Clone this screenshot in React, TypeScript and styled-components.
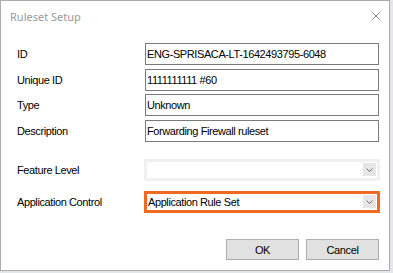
import React from 'react'
import styled, { createGlobalStyle } from 'styled-components'

const GlobalStyle = createGlobalStyle`
    html, body {
        margin: 0;
        padding: 0;
        background: #e4e6ea;
    }
    * {
        box-sizing: border-box;
    }
`

const Dialog = styled.div`
    width: 390px;
    height: 271px;
    background: #ffffff;
    border: 1px solid #ababab;
    display: flex;
    flex-direction: column;
    font-family: 'Liberation Sans', Arial, sans-serif;
    font-size: 11px;
    letter-spacing: -0.4px;
    color: #000000;
`

const TitleBar = styled.div`
    height: 30px;
    display: flex;
    align-items: center;
    justify-content: space-between;
    padding: 0 8px 0 9px;
`

const Title = styled.span`
    font-family: 'Noto Sans', 'Open Sans', sans-serif;
    font-size: 11px;
    letter-spacing: 0;
    color: #9a9a9a;
`

const CloseButton = styled.div`
    width: 10px;
    height: 10px;
    display: flex;
`

const Content = styled.div`
    padding: 12px 10px 0 16px;
    display: flex;
    flex-direction: column;
`

const FieldGrid = styled.div<{ $gap: number; $top?: number }>`
    display: grid;
    grid-template-columns: 128px 1fr;
    row-gap: ${(p) => p.$gap}px;
    align-items: center;
    margin-top: ${(p) => p.$top ?? 0}px;
`

const Label = styled.label`
    white-space: nowrap;
`

const TextBox = styled.input`
    height: 22px;
    width: 100%;
    border: 1px solid #7a7a7a;
    padding: 0 1px;
    font: inherit;
    letter-spacing: inherit;
    color: #000000;
    background: #ffffff;
    outline: none;
`

const Combo = styled.div<{ $variant: 'disabled' | 'highlight' }>`
    height: 22px;
    margin: 0 -1px;
    display: flex;
    align-items: center;
    justify-content: space-between;
    padding: 0 1px 0 1px;
    background: #ffffff;
    border: 3px solid
        ${(p) => (p.$variant === 'highlight' ? '#f26a1f' : '#f0f0f0')};
    color: #000000;
`

const ComboArrow = styled.div`
    width: 13px;
    height: 13px;
    background: #e6e6e6;
    display: flex;
    align-items: center;
    justify-content: center;
`

const ButtonRow = styled.div`
    display: flex;
    justify-content: flex-end;
    gap: 7px;
    margin-top: 26.5px;
`

const Button = styled.button`
    width: 73px;
    height: 21px;
    background: #e1e1e1;
    border: 1px solid #adadad;
    font: inherit;
    letter-spacing: inherit;
    color: #000000;
    padding: 0;
`

const Chevron = () => (
    <svg width="7" height="4" viewBox="0 0 7 4">
        <path d="M0.5 0.5 L3.5 3.5 L6.5 0.5" fill="none" stroke="#6d6d6d" strokeWidth="1" />
    </svg>
)

const CloseIcon = () => (
    <svg width="10" height="10" viewBox="0 0 10 10">
        <path d="M0.5 0.5 L9.5 9.5 M9.5 0.5 L0.5 9.5" stroke="#8c8c8c" strokeWidth="1" />
    </svg>
)

const textFields = [
    { label: 'ID', value: 'ENG-SPRISACA-LT-1642493795-6048' },
    { label: 'Unique ID', value: '1111111111 #60' },
    { label: 'Type', value: 'Unknown' },
    { label: 'Description', value: 'Forwarding Firewall ruleset' },
]

const App = () => {
    return (
        <>
            <GlobalStyle />
            <Dialog>
                <TitleBar>
                    <Title>Ruleset Setup</Title>
                    <CloseButton>
                        <CloseIcon />
                    </CloseButton>
                </TitleBar>
                <Content>
                    <FieldGrid $gap={3.5}>
                        {textFields.map((f) => (
                            <React.Fragment key={f.label}>
                                <Label>{f.label}</Label>
                                <TextBox readOnly value={f.value} />
                            </React.Fragment>
                        ))}
                    </FieldGrid>
                    <FieldGrid $gap={10} $top={17}>
                        <Label>Feature Level</Label>
                        <Combo $variant="disabled">
                            <span />
                            <ComboArrow>
                                <Chevron />
                            </ComboArrow>
                        </Combo>
                        <Label>Application Control</Label>
                        <Combo $variant="highlight">
                            <span>Application Rule Set</span>
                            <ComboArrow>
                                <Chevron />
                            </ComboArrow>
                        </Combo>
                    </FieldGrid>
                    <ButtonRow>
                        <Button>OK</Button>
                        <Button>Cancel</Button>
                    </ButtonRow>
                </Content>
            </Dialog>
        </>
    )
}

export default App
